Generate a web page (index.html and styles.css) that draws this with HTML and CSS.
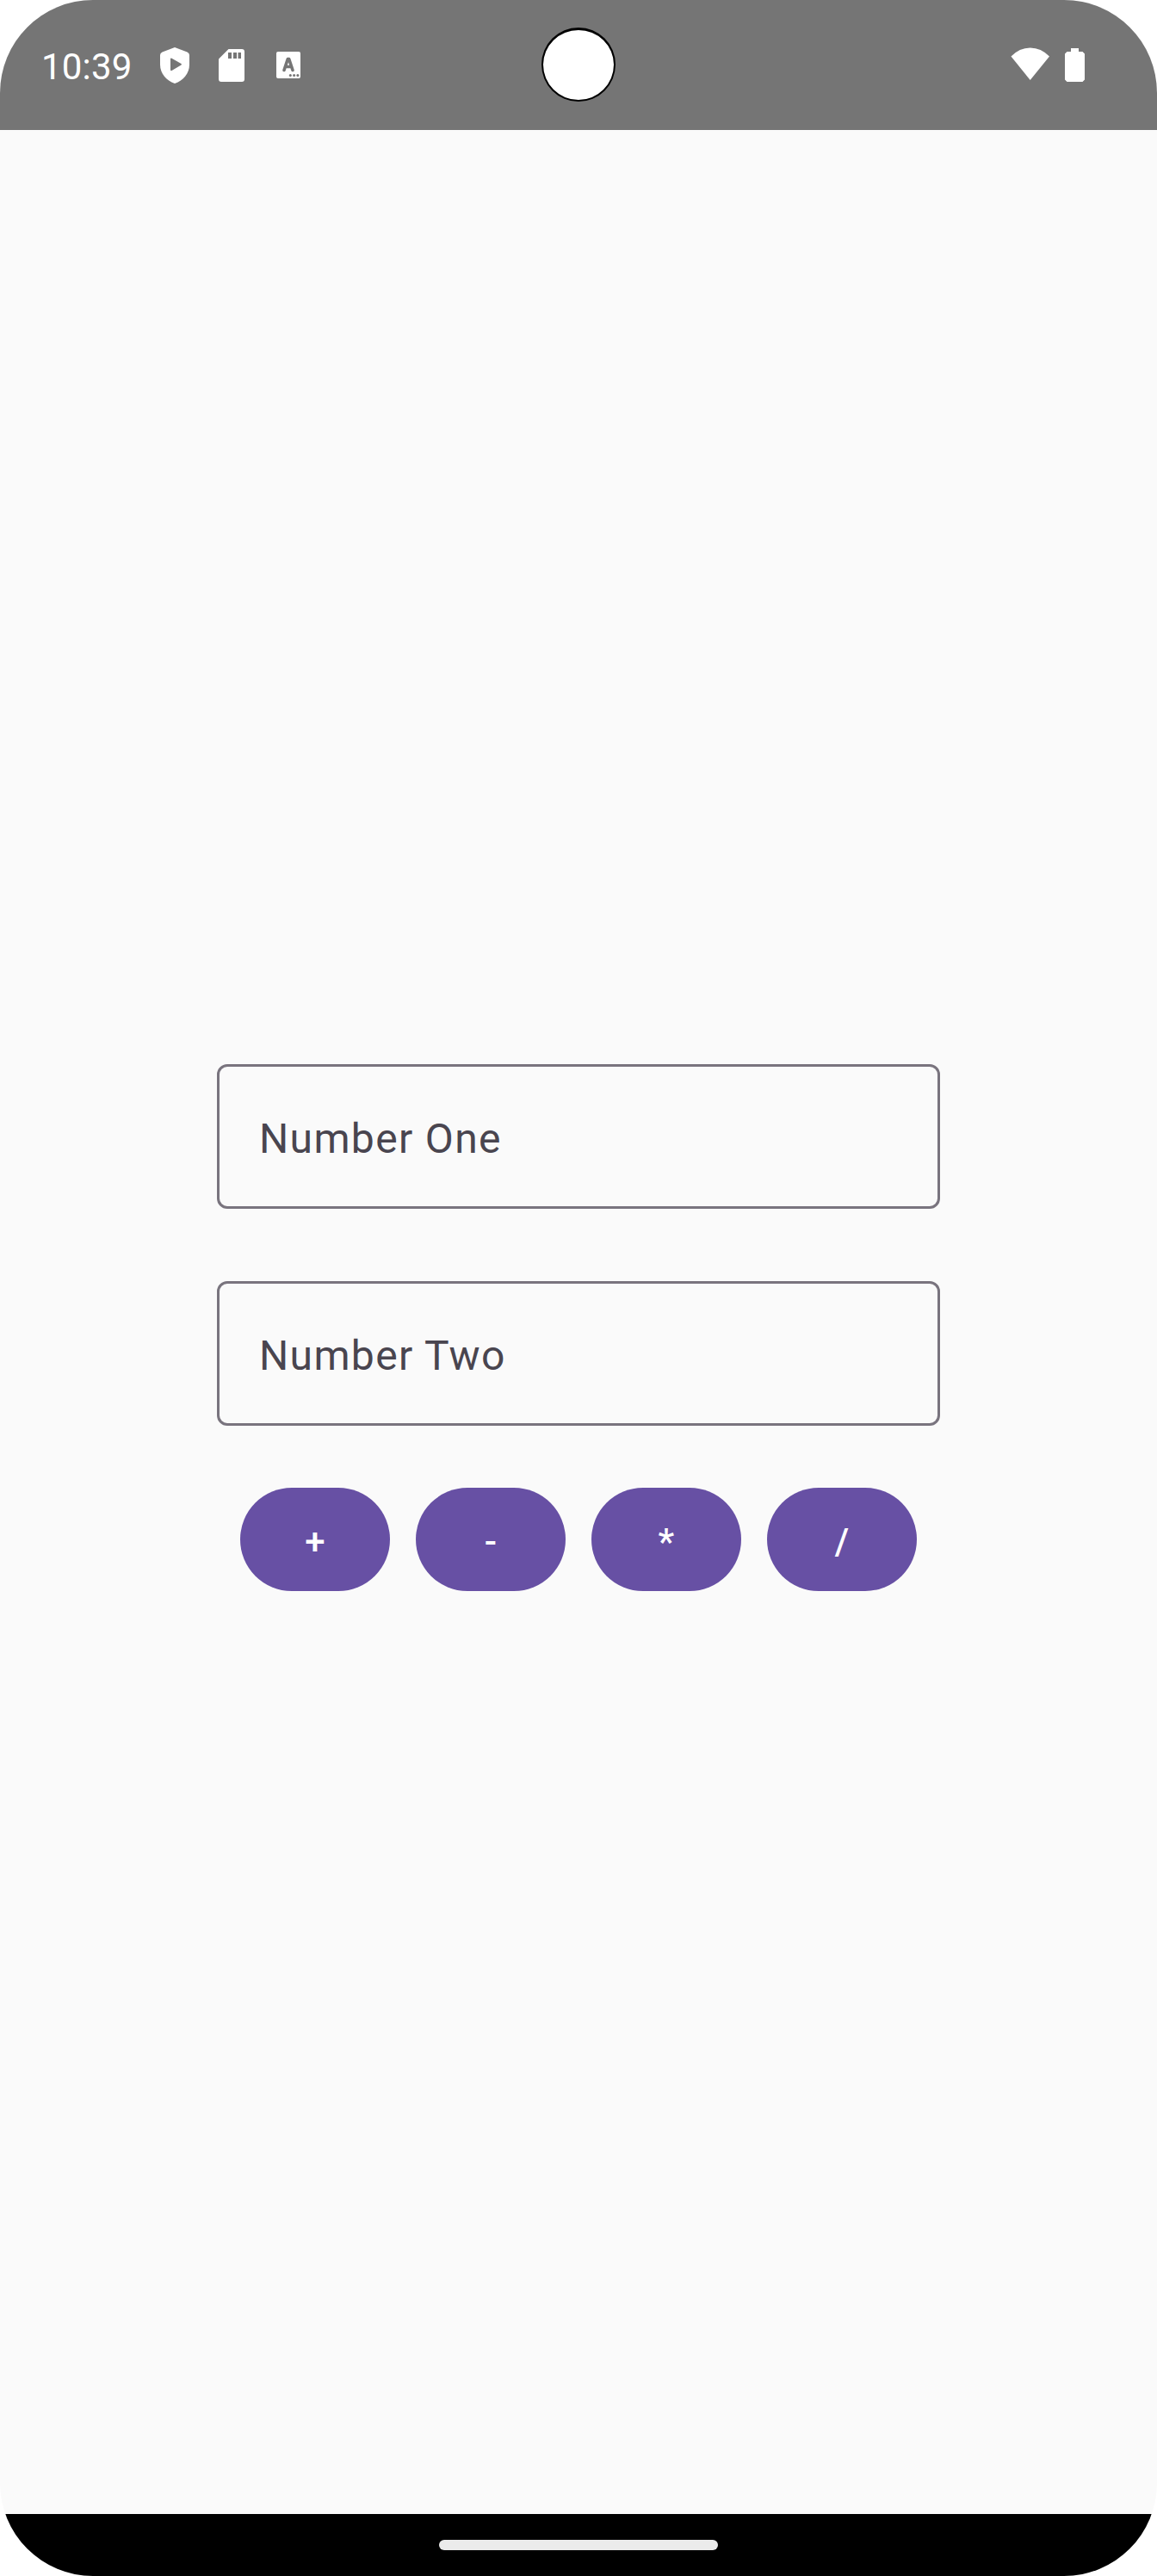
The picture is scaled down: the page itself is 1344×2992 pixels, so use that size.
FILE: index.html
```html
<!DOCTYPE html>
<html lang="en">
<head>
<meta charset="utf-8">
<title>Calculator</title>
<link rel="stylesheet" href="styles.css">
</head>
<body>
<div class="screen">
  <header class="status-bar">
    <div class="status-left">
      <span class="clock">10:39</span>
      <svg class="icon-shield" viewBox="0 0 34 42"><path fill="#fff" d="M17 0 31.500 5.500Q34 6.500 34 9V20C34 30 27 38.500 17 42C7 38.500 0 30 0 20V9Q0 6.500 2.500 5.500Z"/><path fill="#757575" d="M12 13.500Q12 12 13.500 12.700L24.500 19Q25.500 19.700 24.500 20.400L13.500 27Q12 27.500 12 26Z"/></svg>
      <svg class="icon-sd" viewBox="0 0 30 38"><path fill="#fff" d="M11.500 0H27Q30 0 30 3V35Q30 38 27 38H3Q0 38 0 35V11.500Z"/><path fill="#757575" d="M11 4h4v7h-4zM17 4h4v7h-4zM22.500 4h3.500v7h-3.500z"/></svg>
      <svg class="icon-keyboard" viewBox="0 0 28 31"><rect width="28" height="31" rx="2" fill="#fff"/><path fill="none" stroke="#757575" stroke-width="3.600" stroke-linecap="round" stroke-linejoin="round" d="M9 21.500 13.300 8.600H14.700L19 21.500M11 17.500H17"/><g fill="#757575"><circle cx="16.300" cy="27.500" r="1.500"/><circle cx="20.600" cy="27.500" r="1.500"/><circle cx="24.900" cy="27.500" r="1.500"/></g></svg>
    </div>
    <div class="status-right">
      <svg class="icon-wifi" viewBox="0 0 46 38"><path fill="#fff" d="M0.500 10.500Q10 .4 22.700 .4T45 10.500L22.700 38Z"/></svg>
      <svg class="icon-battery" viewBox="0 0 23 39"><path fill="#fff" d="M7 0h9v4h4.500L23 6.500v30L20.500 39h-18L0 36.500v-30L2.500 4H7z"/></svg>
    </div>
    <div class="camera"></div>
  </header>
  <main class="content">
    <div class="field">Number One</div>
    <div class="field">Number Two</div>
    <div class="operators">
      <button class="operator" type="button">+</button>
      <button class="operator" type="button">-</button>
      <button class="operator" type="button">*</button>
      <button class="operator" type="button">/</button>
    </div>
  </main>
  <footer class="nav-bar"><div class="home-handle"></div></footer>
</div>
</body>
</html>
```
FILE: styles.css
```css
body {
  margin: 0;
  background: #fff;
  font-family: Roboto, sans-serif;
}
.screen {
  position: relative;
  display: flex;
  flex-direction: column;
  width: 1344px;
  height: 2992px;
  border-radius: 108px;
  overflow: hidden;
  background: #fafafa;
}
.status-bar {
  display: flex;
  justify-content: space-between;
  box-sizing: border-box;
  height: 151px;
  padding: 55px 84px 0 48px;
  background: #757575;
}
.status-left, .status-right {
  display: flex;
  align-items: flex-start;
}
.status-left svg, .status-right svg { display: block; }
.clock {
  width: 138px;
  margin-top: -2px;
  color: #fff;
  font-size: 42px;
  line-height: 50px;
  letter-spacing: .2px;
}
.icon-shield { width: 34px; height: 42px; }
.icon-sd { width: 30px; height: 38px; margin: 2px 0 0 34px; }
.icon-keyboard { width: 28px; height: 31px; margin: 5px 0 0 37px; }
.icon-wifi { width: 46px; height: 38px; margin-right: 17px; }
.icon-battery { width: 23px; height: 39px; margin-top: 1px; }
.camera {
  position: absolute;
  left: 629px;
  top: 32px;
  box-sizing: border-box;
  width: 86px;
  height: 86px;
  border: 2px solid #000;
  border-top-width: 3px;
  border-radius: 50%;
  background: #fff;
}
.content {
  flex: 1;
  display: flex;
  flex-direction: column;
  align-items: center;
  padding-top: 1085px;
}
.field {
  box-sizing: border-box;
  width: 840px;
  height: 168px;
  margin-bottom: 84px;
  padding: 56px 45px 0 46px;
  border: 3px solid #79747e;
  border-radius: 12px;
  color: #49454f;
  font-size: 48px;
  line-height: 56px;
  letter-spacing: 1.35px;
}
.operators {
  display: flex;
  gap: 30px;
  margin-top: -12px;
}
.operator {
  width: 174px;
  height: 120px;
  padding: 5px 0 0;
  border: 0;
  border-radius: 60px;
  background: #6750a4;
  color: #fff;
  font: 500 42px/60px Roboto, sans-serif;
  letter-spacing: .3px;
}
.nav-bar {
  display: flex;
  justify-content: center;
  box-sizing: border-box;
  height: 72px;
  padding-top: 30px;
  background: #000;
}
.home-handle {
  width: 324px;
  height: 12px;
  border-radius: 6px;
  background: #ebebeb;
}
```
